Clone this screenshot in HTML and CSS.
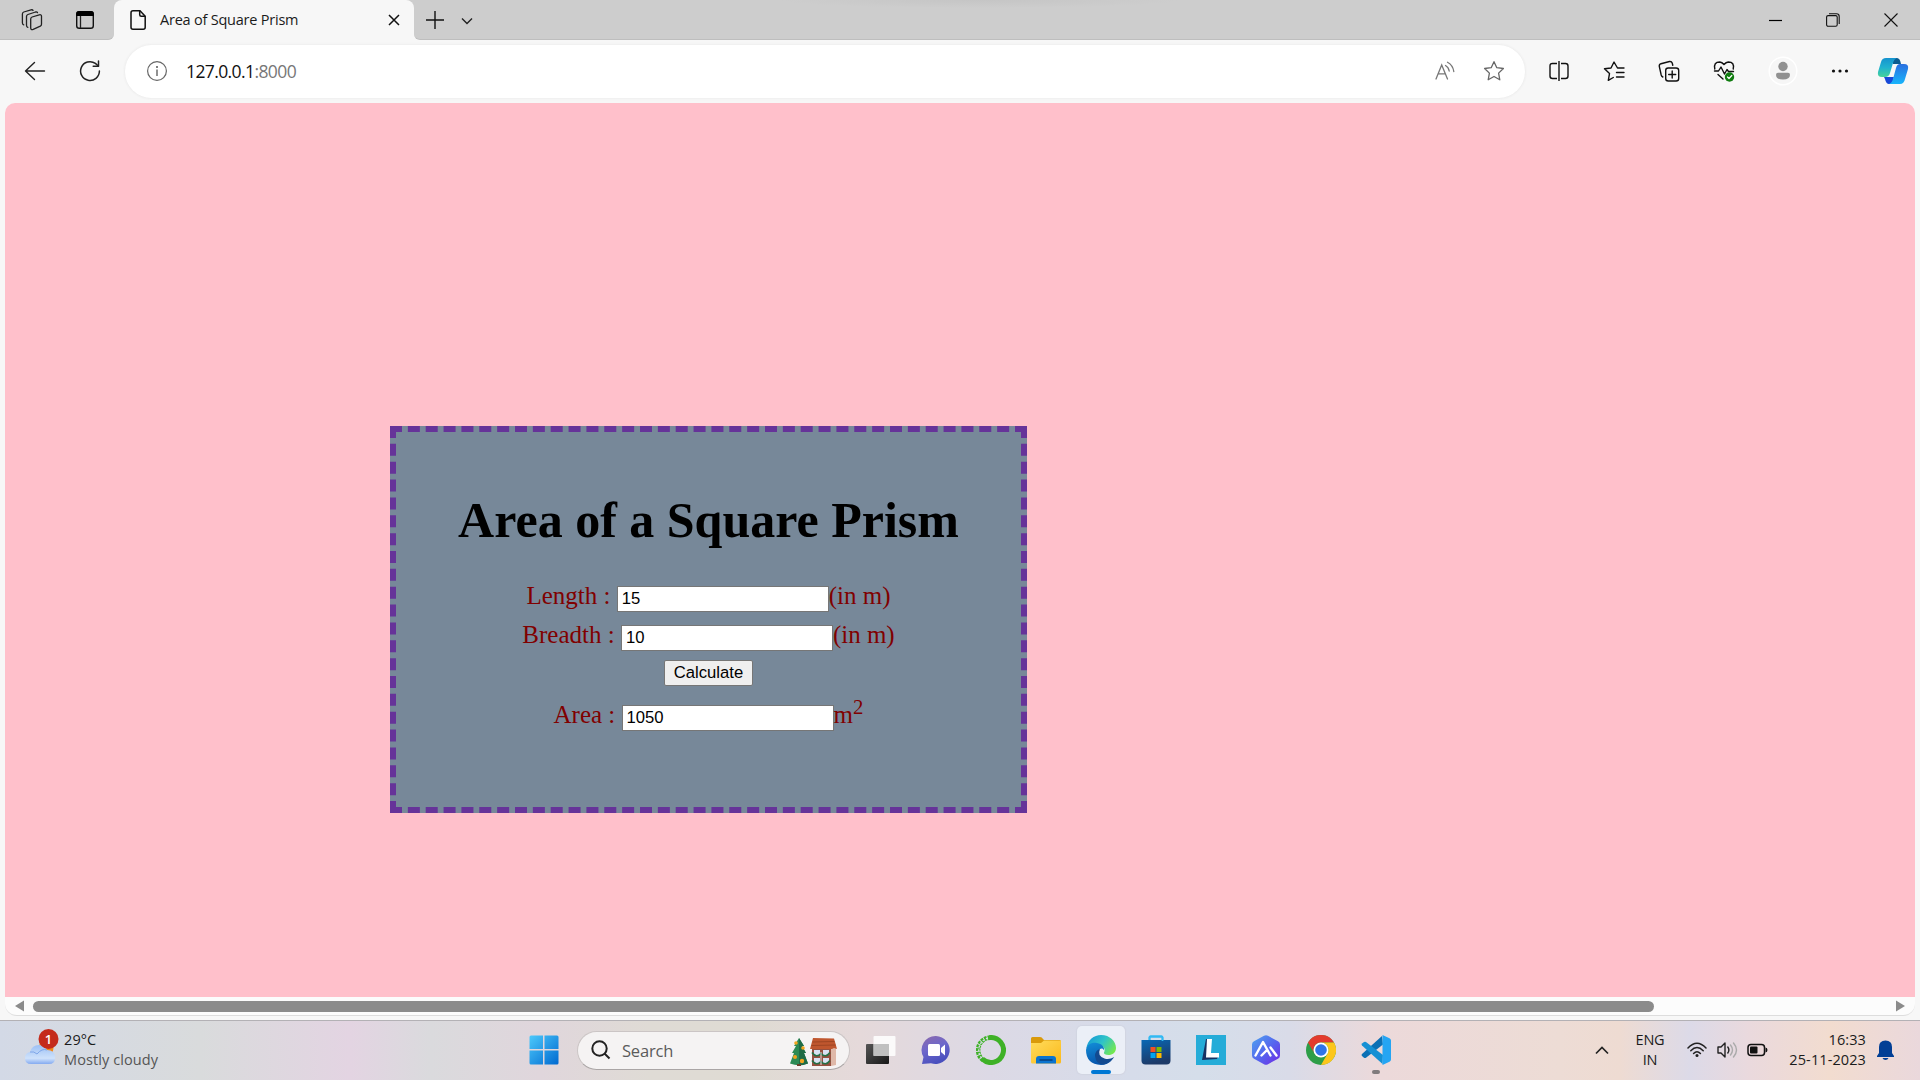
FILE: index.html
```html
<!DOCTYPE html>
<html lang="en">
<head>
<meta charset="utf-8">
<title>Area of Square Prism</title>
<link rel="stylesheet" href="styles.css">
</head>
<body>
<div class="screen">
  <header class="tabs">
    <div class="strip strip-left">
      <svg class="i-work" width="22" height="22" viewBox="0 0 22 22" fill="none" stroke="#222" stroke-width="1.3" stroke-linejoin="round" stroke-linecap="round"><path d="M9.700 10q0-1.500 1.400-2l7.200-2.200q2.200-.5 2.200 1.500v8q0 1.300-1.200 1.900l-7.100 3.200q-2.500.8-2.500-1.500z"/><path d="M6.800 18.300q-1.300-.3-1.300-2V7.500q0-1.500 1.400-2L14.500 3q1.500-.4 2 .6"/><path d="M2.700 15.800Q1.400 15.500 1.400 13.800V5q0-1.500 1.400-2L10 .9q1.500-.4 2 .5"/></svg>
      <svg class="i-pane" width="20" height="20" viewBox="0 0 20 20"><rect x="1.700" y="1.700" width="16.600" height="16.600" rx="2.600" fill="none" stroke="#111" stroke-width="1.400"/><path d="M1.200 6V4q0-3 3-3h11.600q3 0 3 3v2z" fill="#000"/><path d="M5.500 6v12" stroke="#222" stroke-width="1.300"/></svg>
    </div>
    <div class="tab-cell">
      <div class="tab">
        <svg width="18" height="22" viewBox="0 0 18 22" fill="none" stroke="#111" stroke-width="1.500" stroke-linejoin="round"><path d="M4 1.700h7l5.200 5.500v11q0 2-2 2H4q-2 0-2-2v-14.500q0-2 2-2z"/><path d="M10.700 1.700v4q0 1.500 1.500 1.500h4"/></svg>
        <span class="tab-title">Area of Square Prism</span>
        <svg class="tab-x" width="12" height="12" viewBox="0 0 12 12" stroke="#111" stroke-width="1.500"><path d="M1 1l10 10M11 1 1 11"/></svg>
      </div>
    </div>
    <div class="strip strip-right">
      <svg width="18" height="18" viewBox="0 0 18 18" stroke="#111" stroke-width="1.400"><path d="M0 9h18M9 0v18"/></svg>
      <svg class="i-chev" width="12" height="8" viewBox="0 0 12 8" fill="none" stroke="#222" stroke-width="1.400"><path d="m1 1.500 5 5 5-5"/></svg>
      <div class="win">
        <svg width="13" height="14" viewBox="0 0 13 14"><path d="M0 7.500h13" stroke="#000" stroke-width="1.200"/></svg>
        <svg width="14" height="14" viewBox="0 0 14 14" fill="none" stroke="#111" stroke-width="1.100"><rect x=".6" y="2.600" width="10.600" height="10.600" rx="1.500"/><path d="M3 .7h7.500q2.700 0 2.700 2.700V11"/></svg>
        <svg width="14" height="14" viewBox="0 0 14 14" stroke="#111" stroke-width="1.100"><path d="m.5.5 13 13m0-13-13 13"/></svg>
      </div>
    </div>
  </header>

  <nav class="toolbar">
    <svg class="i-back" width="22" height="20" viewBox="0 0 22 20" fill="none" stroke="#222" stroke-width="1.400" stroke-linecap="round" stroke-linejoin="round"><path d="M10.500 1.500 1.500 10l9 8.500M1.500 10h19"/></svg>
    <svg class="i-reload" width="22" height="22" viewBox="0 0 22 22" fill="none" stroke="#222" stroke-width="1.500" stroke-linecap="round" stroke-linejoin="round"><path d="M20.400 11a9.400 9.400 0 1 1-4-7.600L19.300 6"/><path d="M19.500 1v5.300h-5.300"/></svg>
    <div class="address">
      <svg width="22" height="22" viewBox="0 0 22 22"><circle cx="11" cy="11" r="9.400" fill="none" stroke="#666" stroke-width="1.200"/><path d="M11 9.500v6.500" stroke="#555" stroke-width="1.300"/><circle cx="11" cy="6.900" r="1" fill="#555"/></svg>
      <span class="url">127.0.0.1<span class="port">:8000</span></span>
      <svg class="i-read" width="20" height="20" viewBox="0 0 20 20" fill="none" stroke="#777" stroke-width="1.300" stroke-linecap="round"><path d="M1 18 6.700 4 12.500 18M3 12.800h7.500M10.500 4.500q3.300 2 3.700 5.500M12.500 1.200q5.500 3 6.300 9.300"/></svg>
      <svg class="i-star" width="22" height="22" viewBox="0 0 22 22" fill="none" stroke="#666" stroke-width="1.300" stroke-linejoin="round"><path d="m11 1.700 2.800 6 6.600.8-4.800 4.600 1.200 6.700-5.800-3.300-5.800 3.300 1.200-6.700L1.600 8.500l6.600-.8z"/></svg>
    </div>
    <div class="tools">
      <svg width="22" height="22" viewBox="0 0 22 22" fill="none" stroke="#111" stroke-width="1.400"><path d="M9 3.500H4.500q-2.500 0-2.500 2.500v10q0 2.500 2.500 2.500H9M13 3.500h4.500q2.500 0 2.500 2.500v10q0 2.500-2.500 2.500H13M11 1v20"/></svg>
      <svg width="22" height="22" viewBox="0 0 22 22" fill="none" stroke="#111" stroke-width="1.400" stroke-linejoin="round" stroke-linecap="round"><path d="M20 8h-5.500L11 2 8 8l-6.500.8 5 4.800-1.200 6.700 5-2.800M13.500 12.500H21M13.500 17H21M15.500 8H21"/></svg>
      <svg width="22" height="22" viewBox="0 0 22 22" fill="none" stroke="#111" stroke-width="1.400" stroke-linecap="round"><rect x="7.700" y="8" width="13" height="13" rx="2.500"/><path d="M14.200 11v7M10.700 14.500h7M4.800 17Q3.600 16.500 3.200 15L1.300 6.500Q1 4.300 3 3.700L11.500 1.500Q13.600 1.200 14.200 3l.6 2.200"/></svg>
      <svg width="22" height="22" viewBox="0 0 22 22" fill="none" stroke="#111" stroke-width="1.400" stroke-linecap="round" stroke-linejoin="round"><path d="M1.800 9q-1.500-7 5-7Q9 2.200 11 4.500 13 2.200 15.300 2q6.500 0 4.900 7M1.500 11h4L8 7l3.500 7L14 9.500l1.500 2h5M5 14.500l5 4.500"/><circle cx="16.500" cy="17" r="4.700" fill="#107c10" stroke="none"/><path d="m14.500 17 1.500 1.500 2.800-3" stroke="#fff" stroke-width="1.200"/></svg>
      <svg class="i-user" width="30" height="30" viewBox="0 0 30 30"><circle cx="15" cy="15" r="13.800" fill="#f6f6f6" stroke="#fff" stroke-width="1.500"/><circle cx="15" cy="10.500" r="4.700" fill="#919191"/><path d="M10 16.800h10q2 0 2 2 0 4.800-7 4.800t-7-4.800q0-2 2-2z" fill="#919191"/></svg>
      <svg width="18" height="6" viewBox="0 0 18 6" fill="#111"><circle cx="2.500" cy="3" r="1.600"/><circle cx="9" cy="3" r="1.600"/><circle cx="15.500" cy="3" r="1.600"/></svg>
      <svg class="i-copilot" width="32" height="28" viewBox="0 0 32 28"><defs><linearGradient id="cpa" x1="0" y1="0" x2="0" y2="1"><stop offset="0" stop-color="#1693cf"/><stop offset=".5" stop-color="#20b2cf"/><stop offset="1" stop-color="#46d39b"/></linearGradient><linearGradient id="cpb" x1="0" y1="0" x2="0" y2="1"><stop offset="0" stop-color="#2a6fe0"/><stop offset="1" stop-color="#18b5fb"/></linearGradient></defs><path d="M15 1h5q3 0 4 6h-8z" fill="#0c5c90"/><path d="M7 20h10l-2 7h-3q-3 0-4-5z" fill="#1848d8"/><path d="M9 1h11q-3 1-4 5l-3 10q-1 4-5 4H5q-5 0-4-5L4 5q1-4 5-4z" fill="url(#cpa)"/><path d="M23 7h4q5 0 4 5l-3 10q-1 5-5 5H12q3-1 4-5l3-11q1-4 4-4z" fill="url(#cpb)"/></svg>
    </div>
  </nav>

  <main class="frame">
    <div class="page">
      <form class="card">
        <h1>Area of a Square Prism</h1>
        <div class="row">Length : <input type="text" value="15">(in m)</div>
        <div class="row">Breadth : <input type="text" value="10">(in m)</div>
        <div class="row action"><button type="button">Calculate</button></div>
        <div class="row">Area : <input type="text" value="1050">m<sup>2</sup></div>
      </form>
    </div>
    <div class="scrollbar">
      <svg width="9" height="12" viewBox="0 0 9 12"><path d="M9 .5v11L0 6z" fill="#8b8b8b"/></svg>
      <div class="thumb"></div>
      <svg class="right-arrow" width="9" height="12" viewBox="0 0 9 12"><path d="M0 .5v11L9 6z" fill="#8b8b8b"/></svg>
    </div>
  </main>

  <footer class="taskbar">
    <div class="weather">
      <svg width="36" height="40" viewBox="0 0 36 40"><defs><linearGradient id="cl" x1="0" y1="0" x2="0" y2="1"><stop offset="0" stop-color="#9cc0f5"/><stop offset=".7" stop-color="#cfe2fb"/><stop offset="1" stop-color="#84aaf0"/></linearGradient></defs><circle cx="22" cy="20" r="7.500" fill="#f08a1d"/><path d="M7 36q-6 0-6-6 0-5 5-6 2-7 9-7 5 0 8 5 8 0 8 8 0 6-6 6z" fill="url(#cl)"/><path d="M6 24q4-1 7 2 5-6 10-4" fill="none" stroke="#7ea6e8" stroke-width="1"/><circle cx="24.500" cy="11" r="10" fill="#c42b1c"/><text x="24.500" y="16" text-anchor="middle" class="badge">1</text></svg>
      <div class="two"><span>29°C</span><span class="dim">Mostly cloudy</span></div>
    </div>
    <svg class="start" width="30" height="30" viewBox="0 0 30 30"><defs><linearGradient id="wn" x1="0" y1="0" x2="1" y2="1"><stop offset="0" stop-color="#4cc9fb"/><stop offset="1" stop-color="#0069d0"/></linearGradient></defs><path d="M2 .5h12V14H.5V2Q.5.500 2 .5zM15.500.5H28q1.500 0 1.500 1.500v12h-14zM.5 15.500H14v14H2Q.5 29.500.5 28zM15.500 15.500h14V28q0 1.500-1.500 1.500H15.500z" fill="url(#wn)"/></svg>
    <div class="search">
      <svg width="20" height="20" viewBox="0 0 20 20" fill="none" stroke="#222" stroke-width="2"><circle cx="8.500" cy="8.500" r="7.200"/><path d="m13.500 13.500 5 5"/></svg>
      <span>Search</span>
      <svg class="scene" width="48" height="30" viewBox="0 0 48 30"><path d="M9 1 14 9h-2l4 7h-2l4 10.500Q9 30 0 26.500L4 16H2l4-7H4z" fill="#2c8a55"/><path d="m9 1 5 8h-2l4 7h-2l4 10.500q-5 2-9 2z" fill="#1f6b45"/><path d="M7 27h4v2H7z" fill="#6b3f2a"/><g fill="#f2a51f"><circle cx="6" cy="6" r="1.800"/><circle cx="13" cy="11" r="1.800"/><circle cx="5" cy="20" r="2"/><circle cx="12" cy="24" r="2.200"/></g><path d="M22 11h19v18H22z" fill="#96503f"/><path d="M41 11l4-6 1 6v17l-5 1z" fill="#dfb8a8"/><path d="m23 1 21 .5 3 10.500-3-1-2 1H20z" fill="#bf562e"/><path d="m22.500 5 22-.5M21.500 8.500l24-.5" stroke="#96401f" stroke-width=".8"/><path d="M24 13h6v5h-6zM33 13h6v5h-6zM24 21h6v5h-6zM33 21h6v5h-6z" fill="#d9e2f2"/><path d="M22 15.500q4.500 6 9 1 4.500 5 9-1M22 23.500q4.500 6 9 1 4.500 5 9-1" fill="none" stroke="#267046" stroke-width="1.700"/><path d="M31 15v13" stroke="#ddd" stroke-width="1"/></svg>
    </div>
    <div class="apps">
      <div class="app"><svg width="30" height="30" viewBox="0 0 30 30"><defs><linearGradient id="tv" x2="1" y2="1"><stop stop-color="#555"/><stop offset="1" stop-color="#181818"/></linearGradient></defs><rect y="9" width="23" height="20" rx="1" fill="url(#tv)"/><rect x="7.500" y="1" width="22" height="20" rx="1" fill="#fff" fill-opacity=".85"/><path d="M7.500 9H23v12H7.500z" fill="#bdbdbd" opacity=".9"/></svg></div>
      <div class="app"><svg width="30" height="30" viewBox="0 0 30 30"><defs><linearGradient id="ch" x2=".4" y2="1"><stop stop-color="#8d6aab"/><stop offset=".5" stop-color="#6e68cb"/><stop offset="1" stop-color="#4a50be"/></linearGradient></defs><path d="M15 1a14 14 0 1 1-5 27.200L1 29l1.500-7A14 14 0 0 1 15 1z" fill="url(#ch)"/><rect x="7" y="9" width="12" height="12" rx="1.500" fill="#fff"/><path d="m20 13 4-3.500v11L20 17z" fill="#fff"/></svg></div>
      <div class="app"><svg width="30" height="30" viewBox="0 0 30 30" fill="none" stroke="#3eb127"><path d="M13.500 2.600A12.500 12.500 0 1 1 6.500 24.200" stroke-width="5"/><path d="M7 25A12.500 12.500 0 0 1 14 2.600" stroke-width="4.600" stroke-dasharray="2.600 .9"/><path d="M5.500 23A12.500 12.500 0 0 1 12.500 3" stroke="#d9ddea" stroke-width="1.300" stroke-dasharray="2 1.700"/></svg></div>
      <div class="app"><svg width="30" height="30" viewBox="0 0 30 30"><defs><linearGradient id="fd" x2="1" y2="1"><stop stop-color="#ffdc5c"/><stop offset="1" stop-color="#fbb91b"/></linearGradient></defs><path d="M0 8V3.500Q0 2 1.500 2H9q2 0 3 2l1 1h15.500Q30 5 30 6.500V12H0z" fill="#d99a0b"/><path d="M0 8h10l3-2.500h17V27q0 1.500-1.500 1.500h-27Q0 28.500 0 27z" fill="url(#fd)"/><path d="M5 28.500V24q0-3 3-3h14q3 0 3 3v4.500z" fill="#0b74cf"/><path d="M8.500 25h13" stroke="#0a3f7d" stroke-width="1.500"/></svg></div>
      <div class="app active"><svg width="30" height="30" viewBox="0 0 30 30"><defs><linearGradient id="e1" x1="0" y1=".2" x2="1" y2=".7"><stop stop-color="#1599d7"/><stop offset=".5" stop-color="#2fc3c8"/><stop offset="1" stop-color="#75e94d"/></linearGradient><linearGradient id="e2" x2=".3" y2="1"><stop stop-color="#128ed8"/><stop offset="1" stop-color="#0755ac"/></linearGradient></defs><path d="M.3 13.500C1.500 5 8 0 15 0c9 0 15 6.500 15 13 0 4.500-3.500 7-7.500 7-3 0-5-1-4.500-2.500.8-1.500 1.200-4-1-6C12 7 4 8 .3 13.500z" fill="url(#e1)"/><path d="M0 15C1 9 6 7 11 8c5 .8 7.500 4 7 7-1-1.500-2.500-2-4-1-4 3-1 10 4 12q4 1.500 8-1Q21.500 30 15 30 0 29 0 15z" fill="url(#e2)"/><path d="M14 14q-5 1.500-5 7 1 8 8 8.500 7-1 11.300-7.500-5 3-9.800 1.500Q11 21 14 14z" fill="#134a90"/></svg></div>
      <div class="app"><svg width="30" height="30" viewBox="0 0 30 30"><defs><linearGradient id="st" x2=".3" y2="1"><stop stop-color="#0868b5"/><stop offset="1" stop-color="#1d3a68"/></linearGradient></defs><path d="M8.500 7V2.500q0-1 1-1h11q1 0 1 1V7" fill="none" stroke="#31b9f3" stroke-width="1.800"/><path d="M.5 5h29v20.500q0 4-4 4h-21q-4 0-4-4z" fill="url(#st)"/><path d="M8.500 5V2.500q0-1 1-1h11q1 0 1 1V6" fill="none" stroke="#31b9f3" stroke-width="1.800"/><path d="M9.500 12h5v5h-5z" fill="#f25022"/><path d="M15.500 12h5v5h-5z" fill="#7fba00"/><path d="M9.500 18h5v5h-5z" fill="#00a4ef"/><path d="M15.500 18h5v5h-5z" fill="#ffb900"/></svg></div>
      <div class="app"><svg width="30" height="30" viewBox="0 0 30 30"><path d="M0 0h30v30H0z" fill="#25acd8"/><path d="m10 4-4 21 15-1 2-5-11 1 2-16z" fill="#173262"/><path d="M11 4h5l-1 14h8v4.500H10z" fill="#fff"/></svg></div>
      <div class="app"><svg width="30" height="30" viewBox="0 0 30 30"><defs><linearGradient id="ai" x2="1" y2="1"><stop stop-color="#4ea5ef"/><stop offset=".55" stop-color="#5662ee"/><stop offset="1" stop-color="#7228e4"/></linearGradient></defs><path d="M13 .8q2-1.100 4 0l10 5.400q2 1.100 2 3.300v11q0 2.200-2 3.300l-10 5.400q-2 1.100-4 0L3 23.800q-2-1.100-2-3.300v-11q0-2.200 2-3.300z" fill="url(#ai)"/><path d="M4.500 20.500 12 7l7.500 13.500M10.500 20.500l5-5M19.500 12.500l6 8" fill="none" stroke="#fff" stroke-width="2.400" stroke-linecap="round" stroke-linejoin="round"/></svg></div>
      <div class="app"><svg width="30" height="30" viewBox="0 0 30 30"><circle cx="15" cy="15" r="15" fill="#2d9e48"/><path d="M2 7.500A15 15 0 0 1 28 7.500H15a7.500 7.500 0 0 0-6.500 11.300z" fill="#e33b2e"/><path d="M28 7.500A15 15 0 0 1 15 30l6.500-11.300A7.500 7.500 0 0 0 15 7.500z" fill="#fcc61b"/><circle cx="15" cy="15" r="7.500" fill="#fff"/><circle cx="15" cy="15" r="5.800" fill="#2f74e8"/></svg></div>
      <div class="app running"><svg width="30" height="30" viewBox="0 0 30 30"><path d="m21 1-20 18q-1 1 0 2l2 1.700q1 .7 2 0L22 9.500z" fill="#0b70b5"/><path d="m21.500 29-20.500-18.500q-1-1 0-2L3 7q1-.7 2 0l17 13z" fill="#1590d4"/><path d="m21.500 0 7 3.200Q30 4 30 5.500v19q0 1.500-1.500 2.200l-7 3.300z" fill="#25a5f3"/></svg></div>
    </div>
    <div class="tray">
      <svg width="14" height="9" viewBox="0 0 14 9" fill="none" stroke="#222" stroke-width="1.700"><path d="m1 7.500 6-6 6 6"/></svg>
      <div class="two lang"><span>ENG</span><span>IN</span></div>
      <svg class="i-wifi" width="20" height="16" viewBox="0 0 20 16" fill="none" stroke="#222" stroke-width="1.500" stroke-linecap="round"><path d="M1 6q9-9.500 18 0M3.800 8.800q6.200-6.500 12.400 0M6.600 11.500q3.400-3.500 6.800 0"/><circle cx="10" cy="13.600" r="1.500" fill="#222" stroke="none"/></svg>
      <svg class="i-vol" width="21" height="18" viewBox="0 0 21 18" fill="none" stroke="#222" stroke-width="1.400" stroke-linejoin="round" stroke-linecap="round"><path d="M1 6h3l4-4v14l-4-4H1zM10.800 6q2.200 3 0 6"/><path d="M13.500 4q4 5 0 10M16.500 2q6 7 0 14" stroke="#aaa"/></svg>
      <svg class="i-bat" width="21" height="14" viewBox="0 0 21 14"><rect x="1" y="1.500" width="16.500" height="11" rx="3" fill="none" stroke="#111" stroke-width="1.500"/><rect x="3" y="3.500" width="7.500" height="7" rx="1" fill="#111"/><path d="M18.500 4.500q2 .2 2 2.500t-2 2.500z" fill="#111"/></svg>
      <div class="two clock"><span>16:33</span><span>25-11-2023</span></div>
      <svg class="i-bell" width="17" height="20" viewBox="0 0 17 20" fill="#023f95"><path d="M2 13V7q0-6.500 6.500-6.500T15 7v6l2 3v1H0v-1zM5.500 18h6q-.8 2-3 2t-3-2z"/></svg>
    </div>
  </footer>
</div>
</body>
</html>
```
FILE: styles.css
```css
* { box-sizing: border-box; }
body { margin: 0; overflow: hidden; font-family: "Open Sans", "Noto Sans", sans-serif; }
svg { display: block; flex: none; }
.screen { width: 1920px; height: 1080px; display: flex; flex-direction: column; background: #f7f7f7; }

.tabs { display: flex; height: 40px; flex: none; }
.strip { background: #cdcdcd; display: flex; align-items: center; border-bottom: 1px solid #bebebe; }
.strip-left { width: 114px; border-bottom-right-radius: 6px; }
.i-work { margin-left: 21px; }
.i-pane { margin-left: 32px; }
.tab-cell { width: 300px; background: linear-gradient(#cdcdcd 50%, #f7f7f7 50%); }
.tab { height: 40px; padding: 0 14px 0 15px; display: flex; align-items: center; background: #f7f7f7; border-radius: 8px 8px 0 0; }
.tab-title { margin: -2px 0 0 13px; font-size: 14.5px; letter-spacing: -.22px; color: #1b1b1b; white-space: nowrap; }
.tab-x { margin-left: auto; }
.strip-right { flex: 1; padding-left: 12px; border-bottom-left-radius: 6px; background: radial-gradient(200px 8px at 566px 0, #c5c5c5, #cdcdcd); }
.i-chev { margin-left: 17px; margin-top: 3px; }
.win { display: flex; gap: 44px; margin-left: auto; padding-right: 22px; }

.toolbar { height: 63px; padding-bottom: 1px; flex: none; display: flex; align-items: center; }
.i-back { margin-left: 24px; }
.i-reload { margin-left: 33px; }
.address { width: 1400px; height: 53px; margin-left: 24px; padding-left: 21px; display: flex; align-items: center; border-radius: 27px; background: #fff; box-shadow: 0 0 3px #e4e4e4; }
.url { margin-left: 18px; font-size: 17.5px; letter-spacing: -.6px; color: #111; }
.port { color: #777; }
.i-read { margin-left: auto; }
.i-star { margin: 0 20px 0 28px; }
.tools { display: flex; align-items: center; margin-left: 23px; gap: 33px; }
.tools svg:nth-child(6) { margin-left: 0; }
.i-copilot { margin-left: -5px; }

.frame { margin: 0 5px; height: 913px; flex: none; display: flex; flex-direction: column; overflow: hidden; border-radius: 10px 10px 12px 12px; background: #fcfcfc; border-bottom: 1px solid #ddd; }
.page { height: 894px; background: pink; padding: 323px 0 0 385px; }
.card { width: 637px; height: 387px; border: 6px dashed rebeccapurple; background: lightslategray; text-align: center; font-family: "Liberation Serif", "Times New Roman", serif; color: maroon; }
.card h1 { margin: 58px 0 26px; font-size: 50px; line-height: 60px; color: #000; white-space: nowrap; }
.row { height: 39px; font-size: 25px; line-height: 39px; white-space: nowrap; }
.row input { width: 212px; height: 26px; padding: 1px 3px 0 4px; border: 1px solid #767676; background: #fff; color: #000; font: 16.67px "Liberation Sans", Arial, sans-serif; }
.action { height: 41px; display: flex; justify-content: center; padding-top: 6px; }
.action button { width: 89px; height: 26px; padding: 0; border: 1px solid #767676; border-radius: 2px; background: #efefef; color: #000; font: 16.67px "Liberation Sans", Arial, sans-serif; }
.row sup { font-size: 20.8px; line-height: 0; }
.scrollbar { flex: 1; display: flex; align-items: center; padding: 0 10px; }
.thumb { width: 1621px; height: 11px; margin-left: 9px; border-radius: 6px; background: #8b8b8b; }
.right-arrow { margin-left: auto; }

.taskbar { margin-top: 4px; height: 60px; padding-bottom: 1px; flex: none; display: flex; align-items: center; border-top: 1px solid #b3b1b5; background: linear-gradient(90deg, #d3d9e6 0, #d9dbdc 200px, #e3d4e2 350px, #dadadd 430px, #e0d6dc 540px, #dfdbd5 650px, #dfdbd3 750px, #e5d9da 860px, #dcd9e5 990px, #d6dcea 1130px, #d5deea 1200px, #d9dbe8 1290px, #ecd9da 1380px, #eddcd5 1560px, #eedbd2 1620px, #dcdae8 1690px, #ead9dd 1750px, #f2dccf 1830px, #ead8dc 1920px); }
.weather { width: 529px; display: flex; align-items: center; padding-left: 24px; }
.weather svg { margin-top: -5px; }
.badge { font: 600 13px "Open Sans", sans-serif; fill: #fff; }
.two { display: flex; flex-direction: column; font-size: 14.5px; line-height: 20px; letter-spacing: .1px; color: #1b1b1b; white-space: nowrap; }
.weather .two { margin-left: 4px; }
.two .dim { color: #555; }
.search { width: 273px; height: 39px; margin-left: 18px; padding: 0 11px 0 13px; display: flex; align-items: center; border: 1px solid #cbc5c5; border-bottom-color: #aaa5a5; border-radius: 20px; background: #f5f3f3; }
.search span { margin-left: 11px; font-size: 16.5px; color: #5b5b5b; letter-spacing: -.2px; }
.scene { margin-left: auto; margin-top: 3px; }
.apps { display: flex; gap: 7px; margin-left: 7px; }
.app { width: 48px; height: 48px; display: flex; align-items: center; justify-content: center; border-radius: 5px; position: relative; }
.app.active { background: #ebeff7; box-shadow: 0 0 1px 1px #d2d5e2; }
.app.active::after, .app.running::after { content: ""; position: absolute; bottom: 0; width: 20px; height: 4px; border-radius: 2px; background: #0078d4; }
.app.running::after { width: 8px; background: #807b7d; }
.tray { display: flex; align-items: center; margin-left: auto; padding-right: 26px; }
.lang { width: 44px; margin-left: 19px; align-items: center; letter-spacing: -.2px; }
.i-wifi { margin-left: 15px; }
.i-vol { margin-left: 10px; }
.i-bat { margin-left: 9px; }
.clock { width: 98px; align-items: flex-end; }
.i-bell { margin-left: 11px; }
```
